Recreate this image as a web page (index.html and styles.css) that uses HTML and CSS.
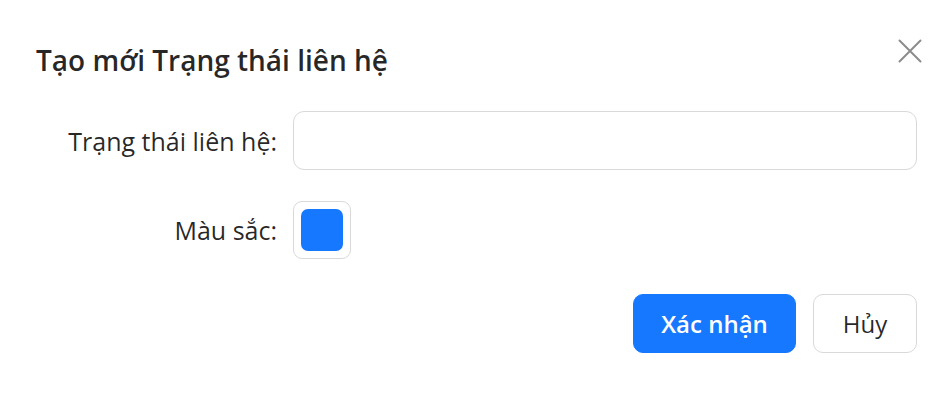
FILE: index.html
```html
<!DOCTYPE html>
<html lang="vi">
<head>
<meta charset="utf-8">
<title>Tạo mới Trạng thái liên hệ</title>
<link rel="stylesheet" href="styles.css">
</head>
<body>
<div class="modal">
  <div class="header">
    <h1 class="title">Tạo mới Trạng thái liên hệ</h1>
    <button class="close" type="button" aria-label="Close">
      <svg width="24" height="24" viewBox="0 0 24 24" aria-hidden="true">
        <path d="M1.5 1.5 L22.5 22.5 M22.5 1.5 L1.5 22.5" stroke="#8c8c8c" stroke-width="2" stroke-linecap="round" fill="none"/>
      </svg>
    </button>
  </div>
  <form class="form">
    <label class="label" for="status">Trạng thái liên hệ:</label>
    <div class="control"><input id="status" class="input" type="text"></div>
    <label class="label">Màu sắc:</label>
    <div class="control"><span class="swatch"><span class="swatch-fill"></span></span></div>
  </form>
  <div class="footer">
    <button class="btn btn-primary" type="button">Xác nhận</button>
    <button class="btn btn-default" type="button">Hủy</button>
  </div>
</div>
</body>
</html>
```

FILE: styles.css
```css
* { box-sizing: border-box; }
html, body {
  margin: 0;
  background: #ffffff;
  font-family: "Open Sans", "Noto Sans", "Liberation Sans", sans-serif;
  color: rgba(0, 0, 0, 0.85);
}
.modal {
  width: 943px;
  height: 401px;
  padding: 0 26px 0 36px;
}
.header {
  display: flex;
  justify-content: space-between;
  align-items: flex-start;
}
.title {
  margin: 40px 0 0 0;
  font-size: 28px;
  line-height: 40px;
  font-weight: 600;
  color: rgba(0, 0, 0, 0.85);
}
.close {
  margin: 39px -5px 0 0;
  padding: 0;
  border: 0;
  background: transparent;
  width: 24px;
  height: 24px;
  display: flex;
}
.form {
  margin-top: 31px;
  display: grid;
  grid-template-columns: 257px 1fr;
  row-gap: 30px;
}
.label {
  display: flex;
  align-items: center;
  justify-content: flex-end;
  height: 59px;
  padding-right: 16px;
  font-size: 25px;
  color: rgba(0, 0, 0, 0.85);
}
.control {
  display: flex;
  align-items: center;
  height: 59px;
}
.input {
  width: 100%;
  height: 59px;
  border: 1.5px solid #d9d9d9;
  border-radius: 11px;
  background: #ffffff;
  font-size: 24px;
  padding: 0 20px;
  outline: none;
}
.swatch {
  display: flex;
  width: 58px;
  height: 58px;
  padding: 7px;
  border: 1.5px solid #d9d9d9;
  border-radius: 9px;
  background: #fff;
}
.swatch-fill {
  flex: 1;
  border-radius: 7px;
  background: #1677ff;
}
.footer {
  margin-top: 35px;
  display: flex;
  justify-content: flex-end;
  gap: 17px;
}
.btn {
  height: 59px;
  border-radius: 10px;
  font-family: inherit;
  font-size: 24px;
  padding: 0;
  cursor: pointer;
}
.btn-primary {
  width: 163px;
  background: #1677ff;
  border: 1.5px solid #1677ff;
  color: #ffffff;
  font-weight: 600;
}
.btn-default {
  width: 104px;
  background: #ffffff;
  border: 1.5px solid #d9d9d9;
  color: rgba(0, 0, 0, 0.85);
}
```
